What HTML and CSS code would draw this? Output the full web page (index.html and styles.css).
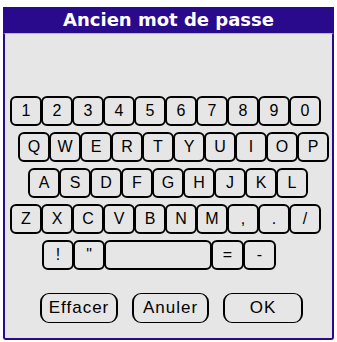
FILE: index.html
```html
<!DOCTYPE html>
<html lang="fr">
<head>
<meta charset="utf-8">
<title>Ancien mot de passe</title>
<link rel="stylesheet" href="styles.css">
</head>
<body>
<div class="window">
  <div class="titlebar">Ancien mot de passe</div>
  <div class="panel">
    <div class="keyboard">
      <div class="row row-digits">
        <div class="key">1</div><div class="key">2</div><div class="key">3</div><div class="key">4</div><div class="key">5</div><div class="key">6</div><div class="key">7</div><div class="key">8</div><div class="key">9</div><div class="key">0</div>
      </div>
      <div class="row row-q">
        <div class="key">Q</div><div class="key">W</div><div class="key">E</div><div class="key">R</div><div class="key">T</div><div class="key">Y</div><div class="key">U</div><div class="key">I</div><div class="key">O</div><div class="key">P</div>
      </div>
      <div class="row row-a">
        <div class="key">A</div><div class="key">S</div><div class="key">D</div><div class="key">F</div><div class="key">G</div><div class="key">H</div><div class="key">J</div><div class="key">K</div><div class="key">L</div>
      </div>
      <div class="row row-z">
        <div class="key">Z</div><div class="key">X</div><div class="key">C</div><div class="key">V</div><div class="key">B</div><div class="key">N</div><div class="key">M</div><div class="key">,</div><div class="key">.</div><div class="key">/</div>
      </div>
      <div class="row row-sym">
        <div class="key">!</div><div class="key">"</div><div class="key key-space"></div><div class="key key-wide">=</div><div class="key key-wide">-</div>
      </div>
    </div>
    <div class="buttons">
      <div class="btn btn-effacer">Effacer</div>
      <div class="btn btn-anuler">Anuler</div>
      <div class="btn btn-ok">OK</div>
    </div>
  </div>
</div>
</body>
</html>
```

FILE: styles.css
```css
html, body {
  margin: 0;
  padding: 0;
  background: #ffffff;
}

body {
  padding: 7px 3px 0 3px;
}

.window {
  width: 331px;
  height: 333px;
  display: flex;
  flex-direction: column;
}

.titlebar {
  height: 26px;
  line-height: 26px;
  background: #2a0a8c;
  color: #ffffff;
  text-align: center;
  font-family: "DejaVu Sans", sans-serif;
  font-weight: bold;
  font-size: 18px;
}

.panel {
  flex: 1;
  background: #e6e6e6;
  border: 2px solid #2a0a8c;
  border-top: 1px solid #b8b0dc;
  border-radius: 0 0 3px 3px;
  display: flex;
  flex-direction: column;
}

.keyboard {
  margin-top: 62px;
  display: flex;
  flex-direction: column;
  gap: 6px;
}

.row {
  display: flex;
  height: 30px;
}

.row-digits { padding-left: 6px; }
.row-q { padding-left: 14px; }
.row-a { padding-left: 24px; }
.row-z { padding-left: 6px; }
.row-sym { padding-left: 38px; }

.key {
  box-sizing: border-box;
  width: 32px;
  height: 30px;
  margin-left: -1px;
  border: 2px solid #000000;
  border-radius: 6px;
  display: flex;
  align-items: center;
  justify-content: center;
  font-family: "Liberation Sans", sans-serif;
  font-size: 16px;
  color: #000000;
}

.key-space { width: 108px; }
.key-wide { width: 33px; }

.buttons {
  margin-top: 23px;
  padding-left: 35px;
  display: flex;
  gap: 14px;
}

.btn {
  box-sizing: border-box;
  height: 30px;
  border: 1px solid #000000;
  border-left-width: 2px;
  border-right-width: 2px;
  border-radius: 9px;
  display: flex;
  align-items: center;
  justify-content: center;
  font-family: "Liberation Sans", sans-serif;
  font-size: 17px;
  letter-spacing: 1px;
  color: #000000;
}

.btn-effacer { width: 78px; }
.btn-anuler { width: 77px; }
.btn-ok { width: 80px; }
```
